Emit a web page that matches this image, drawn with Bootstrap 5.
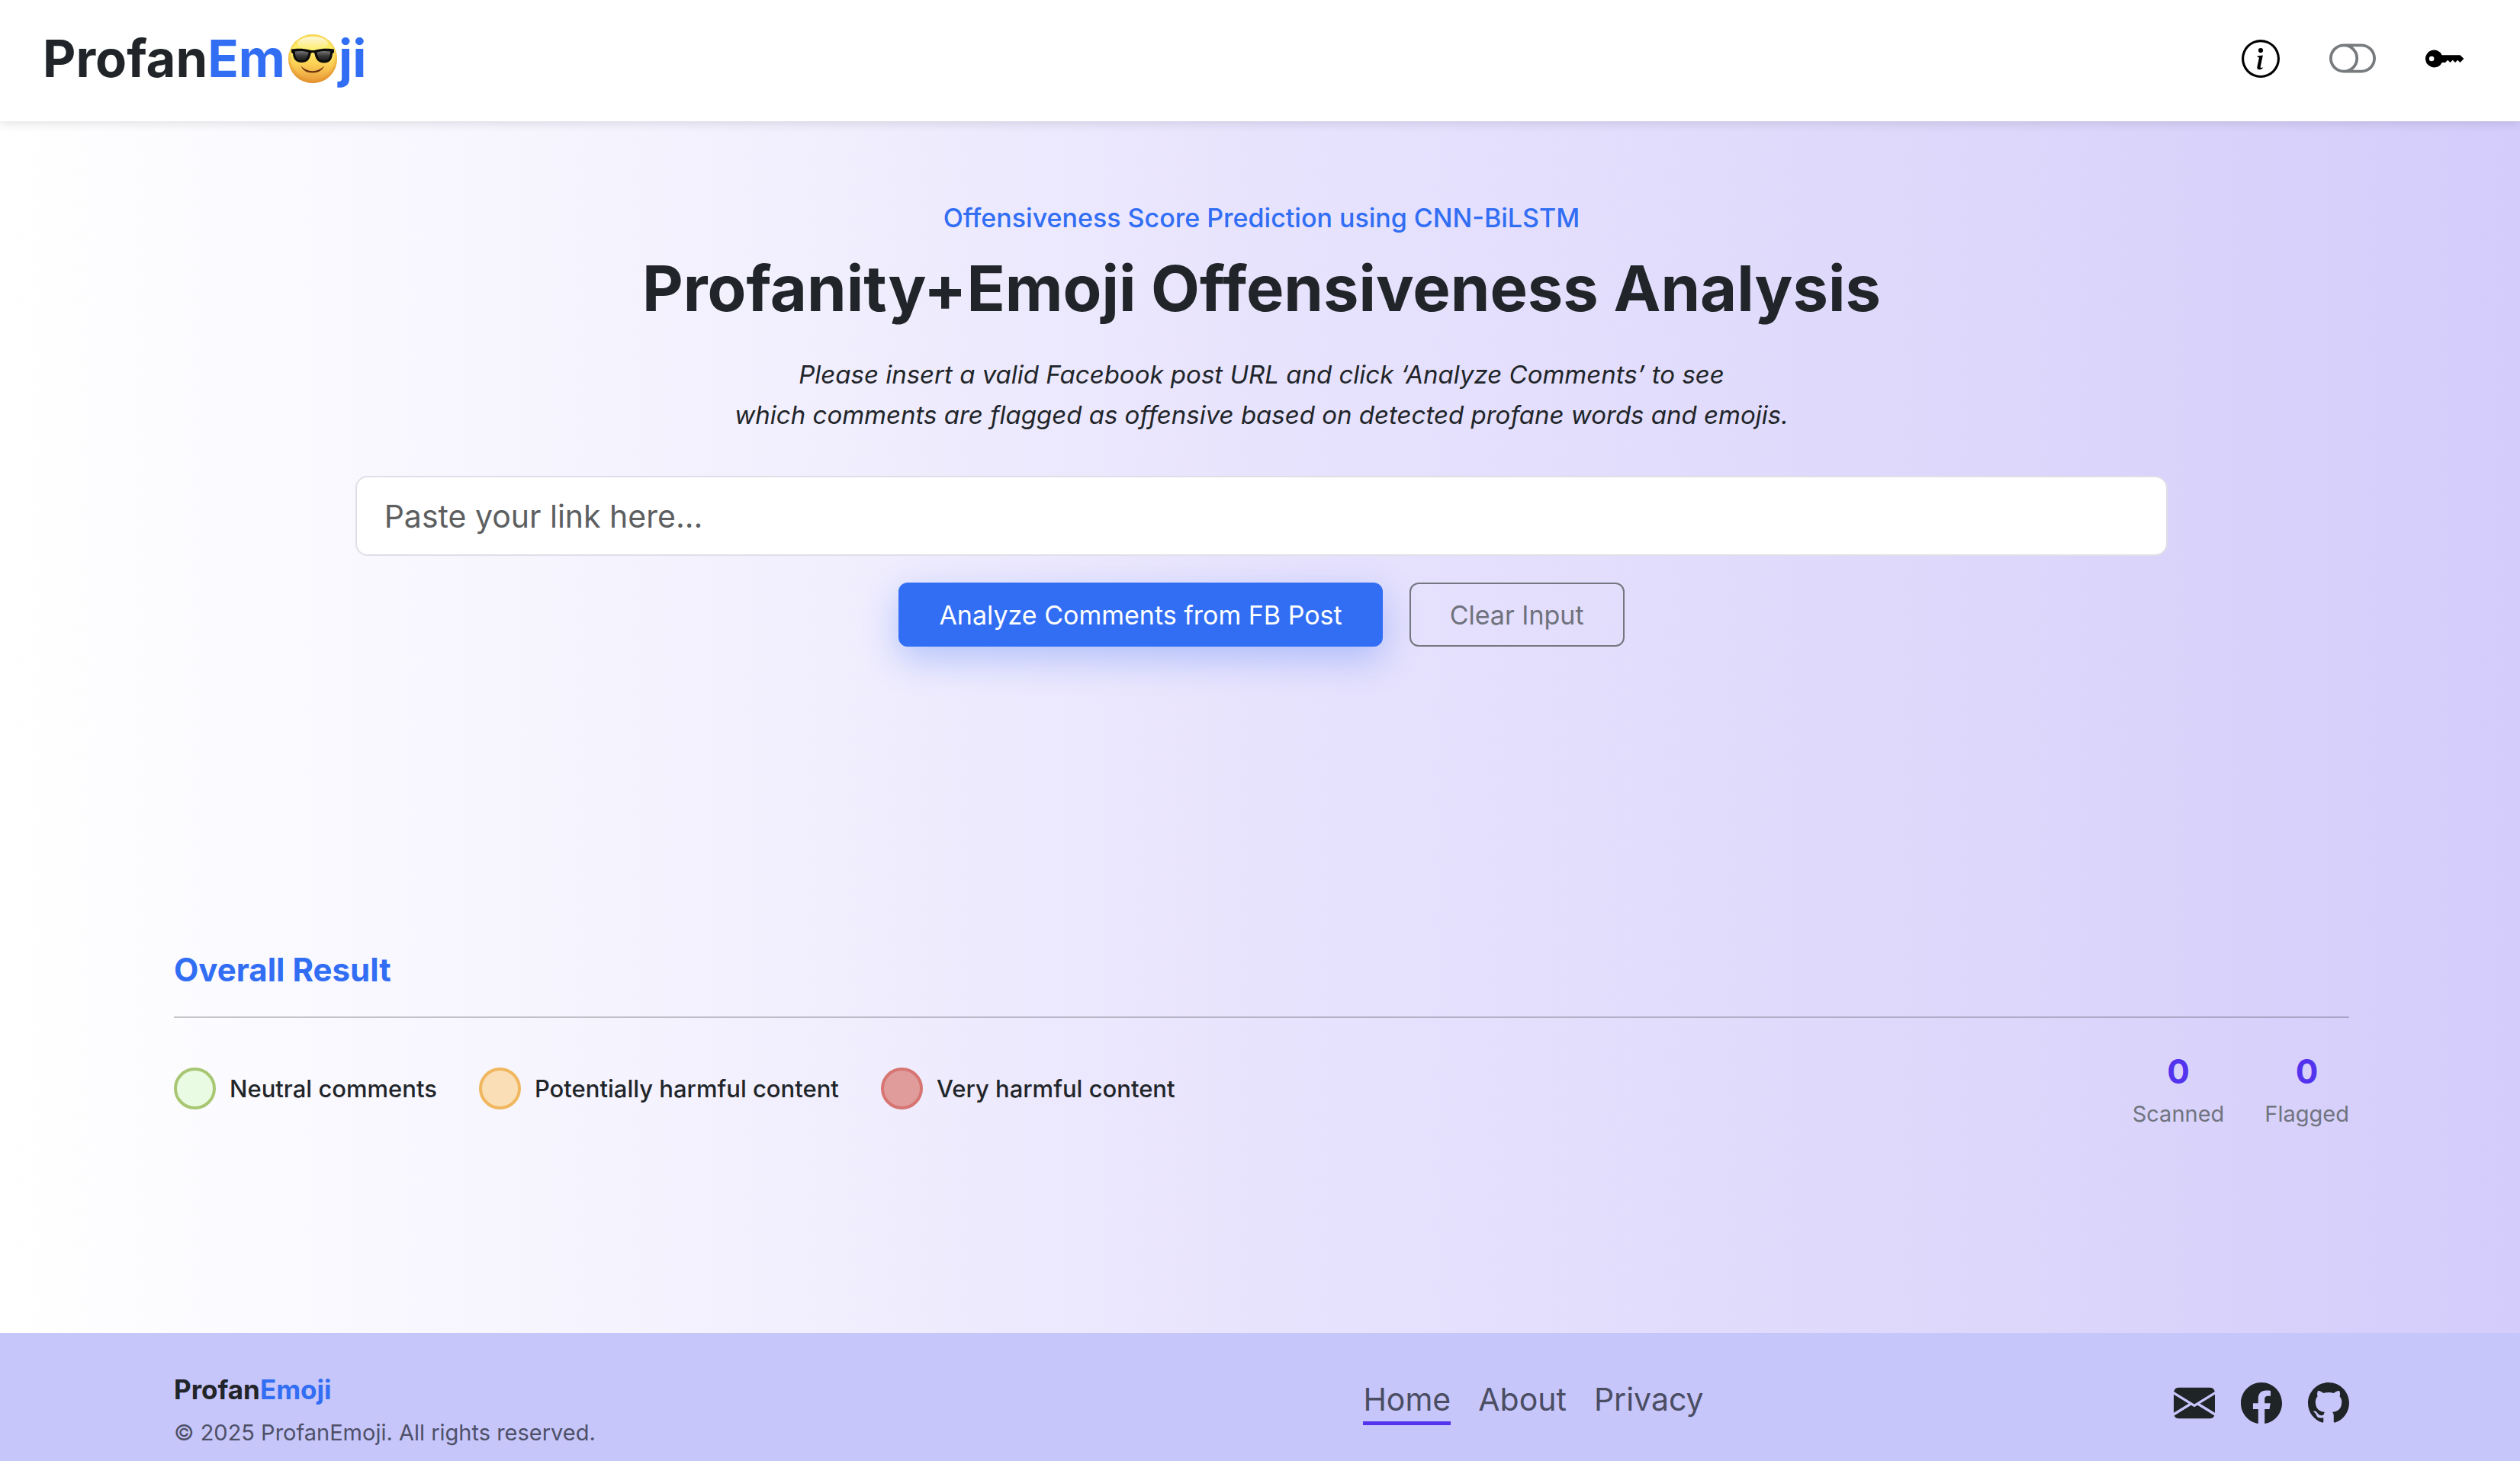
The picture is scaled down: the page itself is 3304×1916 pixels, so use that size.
<!DOCTYPE html>
<html lang="en">
<head>
<meta charset="utf-8">
<meta name="viewport" content="width=device-width, initial-scale=1">
<title>ProfanEmoji</title>
<link rel="stylesheet" href="https://cdn.jsdelivr.net/npm/bootstrap@5.3.0/dist/css/bootstrap.min.css">
<style>
  :root { --brand-blue: #316ef4; --brand-violet: #5333ed; --ink: #212529; }
  body {
    font-family: Inter, "Liberation Sans", sans-serif;
    color: var(--ink);
    background: linear-gradient(90deg, #ffffff 0%, #f4f2fe 27%, #e7e2fd 52%, #ded9fb 76%, #d4ccfb 100%);
  }
  .topbar { height: 159px; padding: 0 72px 6px 56px; background: #fff; box-shadow: 0 4px 12px rgba(0,0,0,.1); z-index: 1; }
  .logo { font-size: 67px; line-height: 84px; font-weight: 700; color: var(--ink); padding: 0; margin: 0; }
  .logo:hover { color: var(--ink); }
  .logo svg { width: 64px; height: 64px; margin: 0 2px 0 4px; }
  .blue { color: var(--brand-blue); }
  .tools { gap: 65px; }
  .tools .btn { line-height: 0; }
  .page-box { padding: 0 224px 0 228px; }
  .hero { padding-top: 100px; padding-bottom: 397px; }
  .tagline { font-size: 34px; line-height: 54px; font-weight: 500; color: var(--brand-blue); margin-bottom: 12px; }
  .headline { font-size: 83px; line-height: 106px; font-weight: 700; margin-bottom: 34px; }
  .intro { font-size: 33px; line-height: 53px; font-style: italic; margin-bottom: 53px; }
  .url-box { height: 105px; font-size: 41px; border: 2px solid #dfdfe8; border-radius: 16px; padding: 0 36px; margin-bottom: 35px; }
  .url-box::placeholder { color: #5d5f61; }
  .actions { gap: 35px; }
  .action { height: 84px; font-size: 34px; padding: 0 51px; border-width: 2px; border-radius: 12px; }
  .action-main { background: var(--brand-blue); border-color: var(--brand-blue); color: #fff; box-shadow: 0 16px 48px rgba(49,110,244,.32); }
  .action-clear { color: #6f727d; border-color: #73757f; }
  .section-title { font-size: 42px; line-height: 53px; font-weight: 700; color: var(--brand-blue); margin-bottom: 35px; }
  .divider { border-top: 2px solid #212529; opacity: .25; margin: 0 0 40px; }
  .legend-list { gap: 55px; padding-top: 25px; font-size: 31px; line-height: 48px; font-weight: 500; }
  .legend-item { gap: 18px; }
  .dot { width: 55px; height: 55px; border: 4px solid; border-radius: 50%; }
  .dot-ok { background: #eafbe4; border-color: #a7c773; }
  .dot-warn { background: #fadfb6; border-color: #f0b75e; }
  .dot-bad { background: #e09c9b; border-color: #d77572; }
  .stats { gap: 53px; }
  .stat-value { font-size: 44px; line-height: 60px; font-weight: 700; color: var(--brand-violet); }
  .stat-label { font-size: 29px; line-height: 52px; color: #70747f; }
  .foot { background: #c6c6fa; padding-top: 48px; padding-bottom: 15px; }
  .foot-brand { font-size: 35px; line-height: 52px; font-weight: 700; margin-bottom: 8px; }
  .foot-copy { font-size: 29px; line-height: 45px; color: #4e5068; }
  .foot-nav { gap: 36px; padding-top: 10px; }
  .foot-link { font-size: 41px; line-height: 58px; color: #4b4d63; text-decoration: none; border-bottom: 5px solid transparent; }
  .foot-link.active { border-color: var(--brand-violet); }
  .foot-icons { gap: 34px; padding-top: 17px; }
  .foot-icons a { color: #1f2427; line-height: 0; }
</style>
</head>
<body>
<div class="d-flex flex-column min-vh-100">
  <header class="topbar position-relative d-flex align-items-center justify-content-between">
    <a href="#" class="logo navbar-brand d-flex align-items-center"><span>Profan<span class="blue">Em</span></span>
      <svg viewBox="0 0 64 64" role="img" aria-label="smiling face with sunglasses">
        <defs>
          <linearGradient id="face" x1="0" y1="0" x2="0" y2="1"><stop offset="0" stop-color="#f9dc55"/><stop offset=".3" stop-color="#fdf067"/><stop offset=".62" stop-color="#fbcf55"/><stop offset="1" stop-color="#e9963a"/></linearGradient>
          <radialGradient id="rim" cx=".5" cy=".46" r=".54"><stop offset=".8" stop-color="#e79b2c" stop-opacity="0"/><stop offset="1" stop-color="#e08d25" stop-opacity=".85"/></radialGradient>
          <linearGradient id="shine" x1="0" y1="0" x2="0" y2="1"><stop offset="0" stop-color="#fff" stop-opacity=".8"/><stop offset="1" stop-color="#fff" stop-opacity="0"/></linearGradient>
          <linearGradient id="lens" x1="0" y1="0" x2="0" y2="1"><stop offset="0" stop-color="#777"/><stop offset=".5" stop-color="#3a3a3a"/><stop offset="1" stop-color="#1b1b1b"/></linearGradient>
        </defs>
        <circle cx="32" cy="32" r="32" fill="url(#face)"/>
        <ellipse cx="32" cy="12" rx="20" ry="9" fill="url(#shine)"/>
        <circle cx="32" cy="32" r="32" fill="url(#rim)"/>
        <path d="M4 19.5c7-1 17-1 24 1 2.500.7 5.500.7 8 0 7-2 17-2 24-1v4l-2 2c-.6 8-4 12-11 12-7.500 0-11-4-12.500-12-.5-2-4.500-2-5 0C28 33.500 24.500 37 17.500 37 10.500 37 6.600 33 6 25.500l-2-2z" fill="#0c0c0c"/>
        <path d="M9 22.500c5-1 13-.8 17.500 1C26 30 22.500 34.500 17.500 34.500 11.500 34.500 8.500 30 9 22.500zM55 22.500c-5-1-13-.8-17.500 1C38 30 41.500 34.500 46.500 34.500 52.500 34.500 55.500 30 55 22.500z" fill="url(#lens)"/>
        <path d="M16.500 41c7 9.500 23.500 9.500 30.500 0-2 6.500-8 9.500-15.200 9.500S18.500 47.500 16.500 41z" fill="#6b3410"/>
      </svg><span class="blue">ji</span></a>
    <div class="tools d-flex align-items-center">
      <button type="button" class="btn p-0 border-0" aria-label="About this tool"><svg width="50" height="50" viewBox="0 0 16 16"><path d="M8 15A7 7 0 1 1 8 1a7 7 0 0 1 0 14zm0 1A8 8 0 1 0 8 0a8 8 0 0 0 0 16z"/><path d="m8.930 6.588-2.290.287-.082.380.450.083c.294.070.352.176.288.469l-.738 3.468c-.194.897.105 1.319.808 1.319.545 0 1.178-.252 1.465-.598l.088-.416c-.2.176-.492.246-.686.246-.275 0-.375-.193-.304-.533L8.930 6.588zM9 4.500a1 1 0 1 1-2 0 1 1 0 0 1 2 0z"/></svg></button>
      <button type="button" class="btn p-0 border-0" aria-label="Toggle mode"><svg width="61" height="61" viewBox="0 0 16 16" fill="#777b7d"><path d="M11 4a4 4 0 0 1 0 8H8a4.992 4.992 0 0 0 2-4 4.992 4.992 0 0 0-2-4h3zm-6 8a4 4 0 1 1 0-8 4 4 0 0 1 0 8zM0 8a5 5 0 0 0 5 5h6a5 5 0 0 0 0-10H5a5 5 0 0 0-5 5z"/></svg></button>
      <button type="button" class="btn p-0 border-0" aria-label="Access key"><svg width="52" height="52" viewBox="0 0 16 16"><path d="M3.500 11.500a3.500 3.500 0 1 1 3.163-5H14L15.500 8 14 9.500l-1-1-1 1-1-1-1 1-1-1-1 1H6.663a3.500 3.500 0 0 1-3.163 2zM2.500 9a1 1 0 1 0 0-2 1 1 0 0 0 0 2z"/></svg></button>
    </div>
  </header>

  <main class="flex-grow-1">
    <section class="hero page-box container-fluid text-center">
      <div class="row justify-content-center gx-0">
        <div class="col-10">
          <p class="tagline">Offensiveness Score Prediction using CNN-BiLSTM</p>
          <h1 class="headline">Profanity+Emoji Offensiveness Analysis</h1>
          <p class="intro" id="urlHelp">Please insert a valid Facebook post URL and click ‘Analyze Comments’ to see<br>which comments are flagged as offensive based on detected profane words and emojis.</p>
          <form>
            <input type="url" id="postUrl" class="form-control url-box" placeholder="Paste your link here..." aria-label="Facebook post URL" aria-describedby="urlHelp">
            <div class="actions d-flex justify-content-center">
              <button type="button" class="btn action action-main">Analyze Comments from FB Post</button>
              <button type="reset" class="btn action action-clear">Clear Input</button>
            </div>
          </form>
        </div>
      </div>
    </section>

    <section class="page-box container-fluid">
      <h2 class="section-title">Overall Result</h2>
      <hr class="divider">
      <div class="d-flex justify-content-between align-items-start">
        <ul class="legend-list list-unstyled d-flex mb-0">
          <li class="legend-item d-flex align-items-center"><span class="dot dot-ok"></span>Neutral comments</li>
          <li class="legend-item d-flex align-items-center"><span class="dot dot-warn"></span>Potentially harmful content</li>
          <li class="legend-item d-flex align-items-center"><span class="dot dot-bad"></span>Very harmful content</li>
        </ul>
        <div class="stats d-flex text-center">
          <div><div class="stat-value">0</div><div class="stat-label">Scanned</div></div>
          <div><div class="stat-value">0</div><div class="stat-label">Flagged</div></div>
        </div>
      </div>
    </section>
  </main>

  <footer class="foot">
    <div class="page-box container-fluid">
      <div class="row gx-0">
        <div class="col-6">
          <div class="foot-brand">Profan<span class="blue">Emoji</span></div>
          <div class="foot-copy">© 2025 ProfanEmoji. All rights reserved.</div>
        </div>
        <nav class="col-3 foot-nav d-flex justify-content-center align-items-start">
          <a href="#" class="foot-link active" aria-current="page">Home</a>
          <a href="#" class="foot-link">About</a>
          <a href="#" class="foot-link">Privacy</a>
        </nav>
        <div class="col-3 foot-icons d-flex justify-content-end align-items-start">
          <a href="#" aria-label="Email"><svg width="54" height="54" viewBox="0 0 16 16" fill="currentColor"><path d="M.050 3.555A2 2 0 0 1 2 2h12a2 2 0 0 1 1.950 1.555L8 8.414.050 3.555zM0 4.697v7.104l5.803-3.558L0 4.697zM6.761 8.830l-6.570 4.027A2 2 0 0 0 2 14h12a2 2 0 0 0 1.808-1.144l-6.570-4.027L8 9.586l-1.239-.757zm3.436-.586L16 11.801V4.697l-5.803 3.546z"/></svg></a>
          <a href="#" aria-label="Facebook"><svg width="54" height="54" viewBox="0 0 16 16" fill="currentColor"><path d="M16 8.049c0-4.446-3.582-8.050-8-8.050C3.580 0-.002 3.603-.002 8.050c0 4.017 2.926 7.347 6.750 7.951v-5.625h-2.030V8.050H6.750V6.275c0-2.017 1.195-3.131 3.022-3.131.876 0 1.791.157 1.791.157v1.980h-1.009c-.993 0-1.303.621-1.303 1.258v1.510h2.218l-.354 2.326H9.250V16c3.824-.604 6.750-3.934 6.750-7.951z"/></svg></a>
          <a href="#" aria-label="GitHub"><svg width="54" height="54" viewBox="0 0 16 16" fill="currentColor"><path d="M8 0C3.580 0 0 3.580 0 8c0 3.540 2.290 6.530 5.470 7.590.400.070.550-.170.550-.380 0-.190-.010-.820-.010-1.490-2.010.370-2.530-.490-2.690-.940-.090-.230-.480-.940-.820-1.130-.280-.150-.680-.520-.010-.530.630-.010 1.080.580 1.230.820.720 1.210 1.870.870 2.330.660.070-.520.280-.870.510-1.070-1.780-.200-3.640-.890-3.640-3.950 0-.870.310-1.590.820-2.150-.080-.200-.360-1.020.080-2.120 0 0 .670-.210 2.200.820.640-.180 1.320-.270 2-.270.680 0 1.360.090 2 .270 1.530-1.040 2.200-.820 2.200-.820.440 1.100.160 1.920.080 2.120.510.560.820 1.270.820 2.150 0 3.070-1.870 3.750-3.650 3.950.290.250.540.730.540 1.480 0 1.070-.010 1.930-.010 2.200 0 .210.150.460.550.380A8.012 8.012 0 0 0 16 8c0-4.420-3.580-8-8-8z"/></svg></a>
        </div>
      </div>
    </div>
  </footer>
</div>
<script src="https://cdn.jsdelivr.net/npm/bootstrap@5.3.0/dist/js/bootstrap.bundle.min.js"></script>
</body>
</html>
